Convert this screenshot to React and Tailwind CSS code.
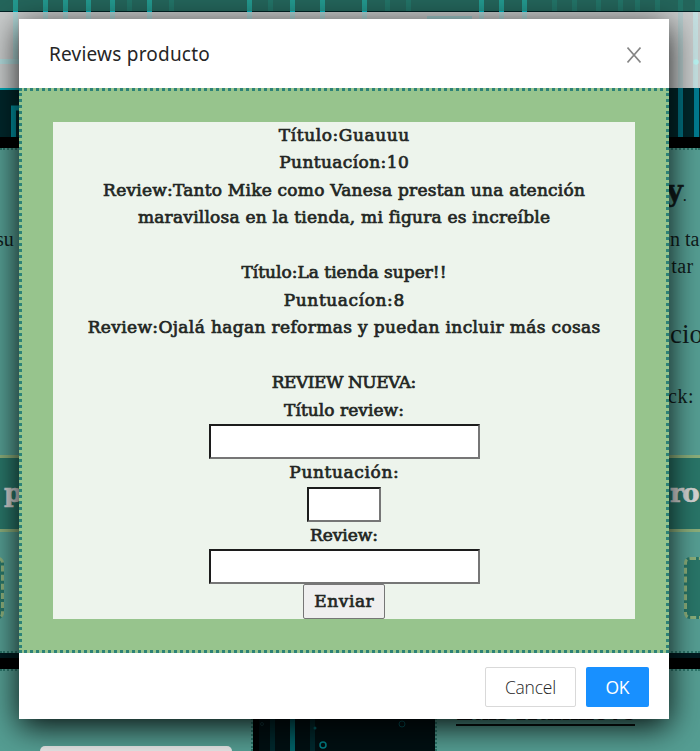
import { useLayoutEffect, useRef } from "react";

// A run of text whose tracking is adjusted so that it spans `width` pixels.
function Fit({ width, children, className = "" }) {
  const ref = useRef(null);
  useLayoutEffect(() => {
    const el = ref.current;
    el.style.letterSpacing = "0px";
    const natural = el.getBoundingClientRect().width;
    const spacing = (width - natural) / children.length;
    el.style.letterSpacing = spacing + "px";
    el.style.marginRight = -spacing + "px";
  }, [width, children]);
  return (
    <span ref={ref} className={"inline-block whitespace-pre " + className}>
      {children}
    </span>
  );
}

function Line({ width, children }) {
  return (
    <div className="flex h-[27.5px] items-center justify-center">
      <Fit width={width}>{children}</Fit>
    </div>
  );
}

const HEADER_LINES = [
  [13, 1], [43, 1], [63, 1], [86, 1], [110, 1], [127, 0], [147, 1], [169, 0], [247, 1], [268, 0],
  [290, 1], [320, 1], [362, 1], [385, 0], [406, 0], [479, 1], [499, 1], [522, 1], [552, 0],
  [572, 0], [596, 0], [618, 0], [635, 0], [655, 0], [678, 0], [695, 0],
];

function Circuit() {
  return (
    <svg className="absolute inset-0" width="700" height="148">
      {HEADER_LINES.map(([x, strong]) => (
        <g key={x}>
          <rect x={x} y="0" width="5" height="11" fill={strong ? "#23998f" : "#237468"} />
          {strong === 1 && <rect x={x} y="11" width="5" height="1" fill="#00b9c5" />}
          {strong === 1 && <rect x={x} y="12" width="5" height={x < 20 ? 50 : 10} fill="#a3dcdb" opacity=".65" />}
        </g>
      ))}
      <rect x="0" y="59" width="19" height="5" fill="#b2dcdd" />
      <rect x="427" y="16" width="45" height="3" fill="#a3cdce" />
      <rect x="678" y="12" width="5" height="76" fill="#b6cccd" />
      <rect x="693" y="12" width="5" height="76" fill="#c5e0e1" />
      <circle cx="696" cy="62" r="2.7" fill="#b8f4f2" />
      <rect x="0" y="88" width="19" height="2" fill="#00a9b8" />
      <path d="M13.500 137V108H19" fill="none" stroke="#0093a2" strokeWidth="5" />
      <rect x="678" y="88" width="5" height="49" fill="#007283" />
      <rect x="694" y="88" width="5" height="49" fill="#007b91" />
    </svg>
  );
}

function Page() {
  return (
    <div className="flex h-[751px] w-[700px] flex-col overflow-hidden bg-[#559e93]">
      <div className="relative flex h-[148px] shrink-0 flex-col">
        <div className="h-[11px] bg-[#24655b]" />
        <div className="h-px bg-[#002225]" />
        <div className="h-[76px] bg-[#c9cccc]" />
        <div className="h-[49px] bg-[#00272b]" />
        <div className="h-[11px] bg-black" />
        <Circuit />
      </div>
      <div className="flex h-[307px] shrink-0 justify-between border-t-2 border-dotted border-[#2a756a] font-['Liberation_Serif',serif] text-[20px] text-[#101c1b]">
        <div className="flex w-[19px] pt-[74px]">
          <span className="-ml-[4px]">su</span>
        </div>
        <div className="flex w-[36px] flex-col whitespace-nowrap pt-[21px]">
          <div className="flex h-[56px] items-baseline pl-[2px] font-['DejaVu_Serif',serif] text-[29px] font-bold leading-[40px]">
            <span className="[-webkit-text-stroke:0.6px_#101c1b]">y</span>
            <span className="font-['Liberation_Serif',serif] text-[16px] font-normal">.</span>
          </div>
          <div className="-ml-[3px] h-[27px] leading-[25px]">en ta</div>
          <div className="h-[62px] pl-[5px] leading-[25px] tracking-[0.500px]">&#8202;tar</div>
          <div className="h-[62px] pl-[6px] text-[27px] leading-[36px]">cio</div>
          <div className="pl-[4px] leading-[36px] tracking-[0.500px]">ck:</div>
        </div>
      </div>
      <div className="flex h-[77px] shrink-0 items-center justify-between border-y-[3px] border-[#8caf7b] bg-[#297669] font-['DejaVu_Serif',serif] text-[26px] font-bold text-[#d5d5d5] [-webkit-text-stroke:0.6px_#d5d5d5]">
        <span className="pl-[4px]">p</span>
        <span className="w-[31px] pl-px tracking-[-1.500px]">ro</span>
      </div>
      <div className="flex h-[119px] shrink-0 items-start justify-between overflow-hidden pt-[25px]">
        <div className="-ml-[16px] h-[62px] w-[20px] rounded-[6px] border-[3px] border-dashed border-[#8caf7b] bg-[#297669]" />
        <div className="-mr-[24px] h-[62px] w-[40px] rounded-[6px] border-[3px] border-dashed border-[#8caf7b] bg-[#297669]" />
      </div>
      <div className="flex h-[20px] shrink-0 flex-col border-y-2 border-dotted border-[#2a756a]">
        <div className="h-[5px] bg-[#001b20]" />
        <div className="h-[11px] bg-black" />
      </div>
      <div className="flex h-[80px] shrink-0">
        <div className="flex w-[251px] items-end pl-[40px]">
          <div className="h-[5px] w-[192px] rounded-t-[5px] bg-[#e8e8e8]" />
        </div>
        <div className="w-[186px] border-x-2 border-dotted border-[#2a756a] bg-[#000f12] bg-clip-padding">
          <svg width="182" height="80">
            <rect width="6" height="80" fill="#000304" />
            <rect x="17" width="5" height="80" fill="#00292e" />
            <rect x="37" width="5" height="80" fill="#006268" />
            <rect x="57" width="5" height="80" fill="#00292e" />
            <circle cx="70" cy="74" r="3" fill="none" stroke="#008087" strokeWidth="1.500" />
            <circle cx="149" cy="53" r="3" fill="none" stroke="#00545a" />
            <circle cx="9" cy="53" r="1.500" fill="none" stroke="#123438" />
            <circle cx="62" cy="57" r="1.500" fill="#006268" />
          </svg>
        </div>
        <div className="ml-[19px] mt-[27px] h-[28px] w-[179px] border-b-2 border-[#0a1110] font-['DejaVu_Serif',serif] text-[24px] font-bold leading-[27px] text-[#0a1110]">
          <Fit width={179}>Luis Humilove</Fit>
        </div>
      </div>
    </div>
  );
}

export default function App() {
  return (
    <div className="relative h-[751px] w-[700px] overflow-hidden">
      <Page />
      <div className="absolute left-[19px] top-[19px] flex h-[700px] w-[650px] flex-col bg-white shadow-[0_8px_30px_rgba(0,0,0,0.9)]">
        <header className="flex h-[69px] shrink-0 items-center justify-between pl-[30px] pr-[28px] pt-[2px] font-['Noto_Sans',sans-serif] text-[19px] text-[#262626]">
          <Fit width={161}>Reviews producto</Fit>
          <svg width="14" height="16" viewBox="0 0 14 16" fill="none" stroke="#858585" strokeWidth="1.600">
            <path d="M.5 .5L13.500 15.500M13.500 .5L.5 15.500" />
          </svg>
        </header>
        <main className="flex h-[565px] shrink-0 flex-col border-[3px] border-dotted border-[#2d8277] bg-[#97c48d] px-[31px] py-[31px]">
          <div className="flex h-[497px] w-[582px] flex-col items-center bg-[#edf4ec] font-['DejaVu_Serif',serif] text-[17px] font-normal text-[#222623] [-webkit-text-stroke:0.7px_#222623]">
            <Line width={131}>Título:Guauuu</Line>
            <Line width={130}>Puntuacíon:10</Line>
            <Line width={482}>Review:Tanto Mike como Vanesa prestan una atención</Line>
            <Line width={412}>maravillosa en la tienda, mi figura es increíble</Line>
            <div className="h-[27.5px]" />
            <Line width={205}>Título:La tienda super!!</Line>
            <Line width={121}>Puntuacíon:8</Line>
            <Line width={513}>Review:Ojalá hagan reformas y puedan incluir más cosas</Line>
            <div className="h-[27.5px]" />
            <Line width={144}>REVIEW NUEVA:</Line>
            <Line width={120}>Título review:</Line>
            <input aria-label="Título review" className="h-[35px] w-[271px] shrink-0 border-2 border-b-[#767676] border-l-[#1c1c1c] border-r-[#767676] border-t-[#1c1c1c] bg-white" />
            <Line width={110}>Puntuación:</Line>
            <input aria-label="Puntuación" className="h-[35px] w-[74px] shrink-0 border-2 border-b-[#767676] border-l-[#1c1c1c] border-r-[#767676] border-t-[#1c1c1c] bg-white" />
            <Line width={68}>Review:</Line>
            <input aria-label="Review" className="h-[35px] w-[271px] shrink-0 border-2 border-b-[#767676] border-l-[#1c1c1c] border-r-[#767676] border-t-[#1c1c1c] bg-white" />
            <button className="flex h-[35px] w-[82px] shrink-0 items-center justify-center rounded-[2px] border border-[#767676] bg-[#efefef]">
              <Fit width={60}>Enviar</Fit>
            </button>
          </div>
        </main>
        <footer className="flex grow items-start justify-end gap-[10px] pr-[20px] pt-[14px] font-['Open_Sans',sans-serif] text-[17.500px] font-light">
          <button className="flex h-[40px] w-[91px] items-center justify-center rounded-[2px] border border-[#d9d9d9] bg-white text-[#262626]">
            <Fit width={51}>Cancel</Fit>
          </button>
          <button className="flex h-[40px] w-[63px] items-center justify-center rounded-[2px] bg-[#1890ff] font-normal text-white">
            <Fit width={24}>OK</Fit>
          </button>
        </footer>
      </div>
    </div>
  );
}
